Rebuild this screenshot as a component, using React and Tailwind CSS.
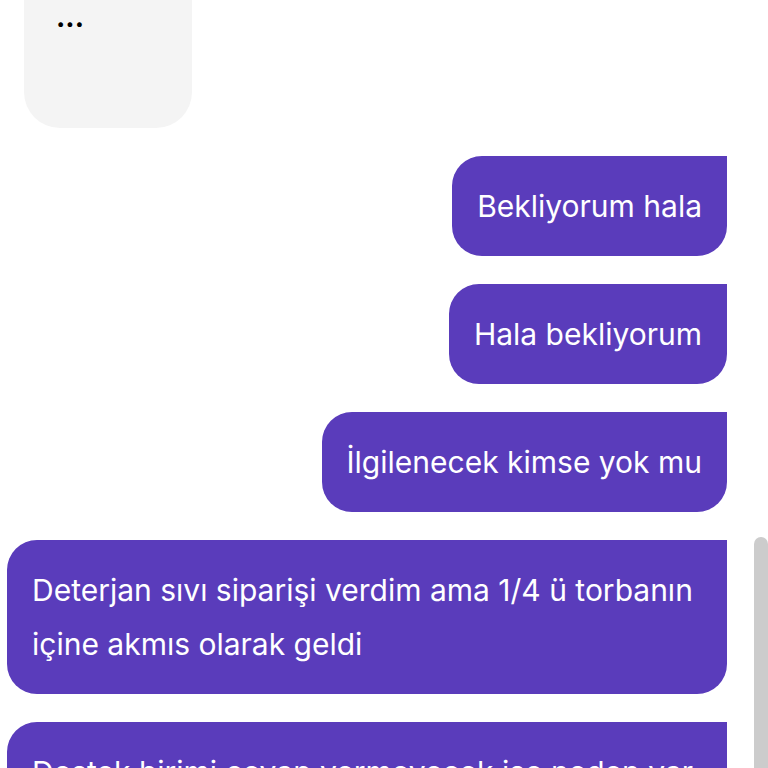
const messages = [
  { id: 1, text: "Bekliyorum hala" },
  { id: 2, text: "Hala bekliyorum" },
  { id: 3, text: "İlgilenecek kimse yok mu" },
  { id: 4, text: "Deterjan sıvı siparişi verdim ama 1/4 ü torbanın içine akmıs olarak geldi" },
  { id: 5, text: "Destek birimi cevap vermeyecek ise neden var", wide: true },
];

function Bubble({ text, wide }) {
  return (
    <div
      className={
        "self-end max-w-[720px] bg-[#5a3cbb] text-white rounded-[30px] rounded-tr-none px-[25px] py-[23px] text-[30px] leading-[54px] " +
        (wide ? "w-[720px]" : "")
      }
    >
      {text}
    </div>
  );
}

export default function App() {
  return (
    <div className="h-[768px] w-[768px] overflow-hidden bg-white flex font-['Inter',sans-serif]">
      <div className="flex-1 flex flex-col gap-[28px] pr-[27px]">
        {/* bot message, scrolled partly out of view */}
        <div className="ml-[24px] w-[168px] h-[128px] shrink-0 bg-[#f4f4f4] rounded-b-[36px] pl-[32px]">
          <span className="block text-[28px] leading-[34px] font-bold text-black">...</span>
        </div>
        {messages.map((m) => (
          <Bubble key={m.id} text={m.text} wide={m.wide} />
        ))}
      </div>
      <div className="w-[14px] flex flex-col">
        <div className="h-[537px] shrink-0" />
        <div className="flex-1 bg-[#cccccc] rounded-t-full" />
      </div>
    </div>
  );
}
